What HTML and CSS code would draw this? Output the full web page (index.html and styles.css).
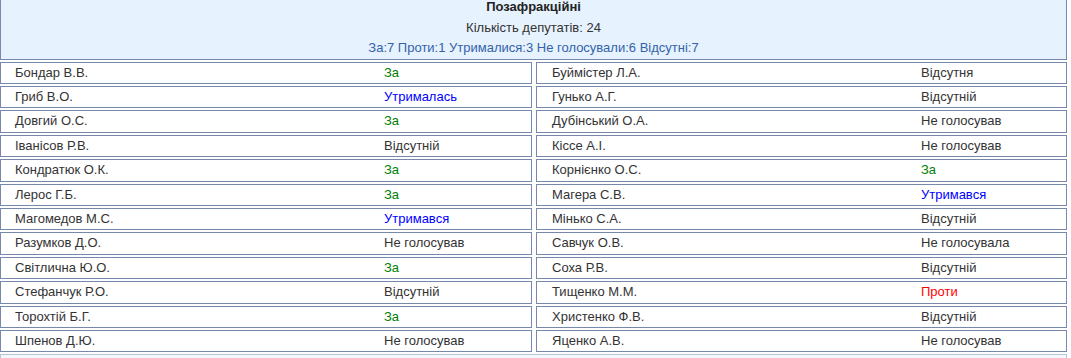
FILE: index.html
```html
<!DOCTYPE html>
<html lang="uk">
<head>
<meta charset="utf-8">
<link rel="stylesheet" href="styles.css">
</head>
<body>
<div class="page">
  <div class="faction">
    <div class="title">Позафракційні</div>
    <div class="count">Кількість депутатів: 24</div>
    <div class="summary">За:7 Проти:1 Утрималися:3 Не голосували:6 Відсутні:7</div>
  </div>
  <div class="grid">
    <div class="cell"><span class="name">Бондар В.В.</span><span class="vote v-for">За</span></div>
    <div class="cell"><span class="name">Буймістер Л.А.</span><span class="vote">Відсутня</span></div>
    <div class="cell"><span class="name">Гриб В.О.</span><span class="vote v-abst">Утрималась</span></div>
    <div class="cell"><span class="name">Гунько А.Г.</span><span class="vote">Відсутній</span></div>
    <div class="cell"><span class="name">Довгий О.С.</span><span class="vote v-for">За</span></div>
    <div class="cell"><span class="name">Дубінський О.А.</span><span class="vote">Не голосував</span></div>
    <div class="cell"><span class="name">Іванісов Р.В.</span><span class="vote">Відсутній</span></div>
    <div class="cell"><span class="name">Кіссе А.І.</span><span class="vote">Не голосував</span></div>
    <div class="cell"><span class="name">Кондратюк О.К.</span><span class="vote v-for">За</span></div>
    <div class="cell"><span class="name">Корнієнко О.С.</span><span class="vote v-for">За</span></div>
    <div class="cell"><span class="name">Лерос Г.Б.</span><span class="vote v-for">За</span></div>
    <div class="cell"><span class="name">Магера С.В.</span><span class="vote v-abst">Утримався</span></div>
    <div class="cell"><span class="name">Магомедов М.С.</span><span class="vote v-abst">Утримався</span></div>
    <div class="cell"><span class="name">Мінько С.А.</span><span class="vote">Відсутній</span></div>
    <div class="cell"><span class="name">Разумков Д.О.</span><span class="vote">Не голосував</span></div>
    <div class="cell"><span class="name">Савчук О.В.</span><span class="vote">Не голосувала</span></div>
    <div class="cell"><span class="name">Світлична Ю.О.</span><span class="vote v-for">За</span></div>
    <div class="cell"><span class="name">Соха Р.В.</span><span class="vote">Відсутній</span></div>
    <div class="cell"><span class="name">Стефанчук Р.О.</span><span class="vote">Відсутній</span></div>
    <div class="cell"><span class="name">Тищенко М.М.</span><span class="vote v-against">Проти</span></div>
    <div class="cell"><span class="name">Торохтій Б.Г.</span><span class="vote v-for">За</span></div>
    <div class="cell"><span class="name">Христенко Ф.В.</span><span class="vote">Відсутній</span></div>
    <div class="cell"><span class="name">Шпенов Д.Ю.</span><span class="vote">Не голосував</span></div>
    <div class="cell"><span class="name">Яценко А.В.</span><span class="vote">Не голосував</span></div>
  </div>
  <div class="faction next"></div>
</div>
</body>
</html>
```

FILE: styles.css
```css
html, body {
  margin: 0;
  padding: 0;
  background: #ffffff;
}
body {
  font-family: "Liberation Sans", Arial, sans-serif;
  font-size: 13px;
  color: #333333;
  overflow: hidden;
}
.page {
  width: 1067px;
  margin-top: -4px;
}
.faction {
  background: #e6f2fd;
  border: 1px solid #7788ad;
  text-align: center;
  padding: 0;
  line-height: 20.5px;
}
.title {
  font-weight: bold;
  color: #222222;
}
.count {
  color: #333333;
}
.summary {
  color: #3462ab;
}
.grid {
  display: grid;
  grid-template-columns: 532px 531px;
  column-gap: 4px;
  row-gap: 2px;
  margin-top: 2px;
}
.cell {
  display: grid;
  grid-template-columns: 369px 1fr;
  padding-left: 14px;
  border: 1px solid #7788ad;
  line-height: 20.4px;
  background: #ffffff;
}
.cell:nth-child(even) {
  padding-left: 15px;
}
.vote { color: #333333; }
.v-for { color: #008000; }
.v-abst { color: #0000ff; }
.v-against { color: #ff0000; }
.next {
  margin-top: 2px;
  height: 30px;
  background: #f4f8fd;
  border-color: #b8c4dc;
}
```
